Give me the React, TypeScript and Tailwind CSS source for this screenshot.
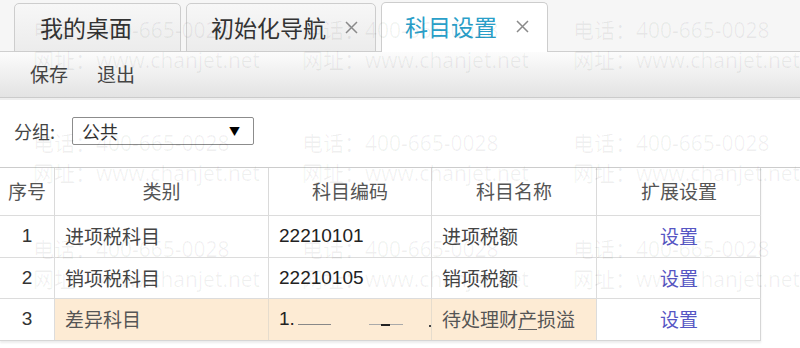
import React from "react";

const cjk = '"Noto Sans CJK SC", "Open Sans", sans-serif';
const body = 'Arial, "Liberation Sans", "Noto Sans CJK SC", sans-serif';

function Close({ className = "" }: { className?: string }) {
  return (
    <svg width="15" height="15" viewBox="0 0 15 15" className={className}>
      <path d="M2 2 L13 13 M13 2 L2 13" stroke="currentColor" strokeWidth="1.5" fill="none" />
    </svg>
  );
}

const headers = ["序号", "类别", "科目编码", "科目名称", "扩展设置"];

export default function App() {
  const wmCols = [33, 302, 573];
  const wmRows = [15, 128, 234];
  return (
    <div
      className="relative w-[800px] h-[348px] overflow-hidden bg-white"
      style={{ fontFamily: body }}
    >
      {/* Tab strip */}
      <div className="h-[52px] bg-[#f6f6f6] border-b border-[#cfcfcf] flex items-end pl-[14px] gap-[5px]">
        <div
          className="h-[49px] w-[167px] -mb-px rounded-t-[5px] border border-[#cdcdcd] bg-gradient-to-b from-[#f7f7f7] to-[#ececec] flex items-center pl-[25px] text-[23px] text-[#333]"
          style={{ fontFamily: cjk }}
        >
          我的桌面
        </div>
        <div
          className="h-[49px] w-[190px] -mb-px rounded-t-[5px] border border-[#cdcdcd] bg-gradient-to-b from-[#f7f7f7] to-[#ececec] flex items-center pl-[24px] text-[23px] text-[#333]"
          style={{ fontFamily: cjk }}
        >
          <span>初始化导航</span>
          <Close className="ml-[18px] text-[#8a8a8a]" />
        </div>
        <div
          className="h-[50px] w-[167px] -mb-px rounded-t-[5px] border border-b-0 border-[#cdcdcd] bg-white flex items-center pl-[23px] pb-[2px] text-[23px] text-[#2a9fc9]"
          style={{ fontFamily: cjk }}
        >
          <span>科目设置</span>
          <Close className="ml-[18px] text-[#8a8a8a]" />
        </div>
      </div>

      {/* Toolbar */}
      <div
        className="h-[46px] bg-gradient-to-b from-[#fcfcfc] to-[#e3e3e3] border-b border-[#cbcbcb] flex items-center pl-[30px] gap-[29px] text-[19px] text-[#444]"
        style={{ fontFamily: cjk }}
      >
        <span>保存</span>
        <span>退出</span>
      </div>
      <div className="h-[2px] bg-[#eeeeee]" />

      {/* Filter */}
      <div className="h-[67px] flex items-start pt-[17px] pl-[14px] text-[18px] text-[#444]" style={{ fontFamily: cjk }}>
        <div className="flex items-center h-[28px]">
          <span>分组:</span>
          <div className="ml-[17px] w-[182px] h-[28px] border border-[#8c8c8c] rounded-[2px] flex items-center justify-between pl-[9px] pr-[13px] text-[#333]">
            <span>公共</span>
            <span className="text-[11px] text-black">▼</span>
          </div>
        </div>
      </div>

      {/* Table */}
      <div className="border-t border-[#cccccc]">
        <div
          className="grid w-[761px] border-r border-b border-[#d6d6d6] shadow-[0_2px_2px_rgba(0,0,0,0.08)]"
          style={{ gridTemplateColumns: "55px 214px 163px 165px 164px" }}
        >
          {headers.map((h, i) => (
            <div
              key={h}
              className={`h-[48px] flex items-center justify-center border-b border-[#dcdcdc] text-[19px] text-[#555] ${i < 4 ? "border-r border-r-[#dadada]" : ""}`}
              style={{ fontFamily: cjk }}
            >
              {h}
            </div>
          ))}

          {/* Row 1 */}
          <div className="h-[42px] flex items-center justify-center border-r border-b border-[#dcdcdc] text-[19px] text-[#333]">1</div>
          <div className="h-[42px] flex items-center pl-[10px] border-r border-b border-[#dcdcdc] text-[19px] text-[#444]" style={{ fontFamily: cjk }}>进项税科目</div>
          <div className="h-[42px] flex items-center pl-[10px] border-r border-b border-[#dcdcdc] text-[19px] text-[#222]">22210101</div>
          <div className="h-[42px] flex items-center pl-[10px] border-r border-b border-[#dcdcdc] text-[19px] text-[#444]" style={{ fontFamily: cjk }}>进项税额</div>
          <div className="h-[42px] flex items-center justify-center border-b border-[#dcdcdc] text-[19px] text-[#5656c4]" style={{ fontFamily: cjk }}>设置</div>

          {/* Row 2 */}
          <div className="h-[41px] flex items-center justify-center border-r border-b border-[#dcdcdc] text-[19px] text-[#333]">2</div>
          <div className="h-[41px] flex items-center pl-[10px] border-r border-b border-[#dcdcdc] text-[19px] text-[#444]" style={{ fontFamily: cjk }}>销项税科目</div>
          <div className="h-[41px] flex items-center pl-[10px] border-r border-b border-[#dcdcdc] text-[19px] text-[#222]">22210105</div>
          <div className="h-[41px] flex items-center pl-[10px] border-r border-b border-[#dcdcdc] text-[19px] text-[#444]" style={{ fontFamily: cjk }}>销项税额</div>
          <div className="h-[41px] flex items-center justify-center border-b border-[#dcdcdc] text-[19px] text-[#5656c4]" style={{ fontFamily: cjk }}>设置</div>

          {/* Row 3 */}
          <div className="h-[41px] flex items-center justify-center border-r border-[#dcdcdc] text-[19px] text-[#333]">3</div>
          <div className="h-[41px] flex items-center pl-[10px] border-r border-[#e6dccd] bg-[#fdebd4] text-[19px] text-[#555]" style={{ fontFamily: cjk }}>差异科目</div>
          <div className="h-[41px] flex items-center pl-[10px] border-r border-[#e6dccd] bg-[#fdebd4] text-[19px] text-[#222]">
            <span>1.</span>
            <span className="ml-[3px] mt-[10px] w-[36px] border-b border-[#888]" />
            <span className="ml-[38px] mt-[10px] w-[14px] border-b border-[#aaa]" />
            <span className="mt-[10px] w-[10px] border-b-2 border-[#222]" />
            <span className="mt-[10px] w-[14px] border-b border-[#aaa]" />
            <span className="ml-[26px] mt-[12px] w-[2px] h-[2px] bg-[#444]" />
          </div>
          <div className="h-[41px] flex items-center pl-[10px] border-r border-[#dcdcdc] bg-[#fdebd4] text-[19px] text-[#555]" style={{ fontFamily: cjk }}>
            待处理财<span className="underline decoration-[#666] underline-offset-2">产</span>损溢
          </div>
          <div className="h-[41px] flex items-center justify-center text-[19px] text-[#5656c4]" style={{ fontFamily: cjk }}>设置</div>
        </div>
      </div>

      {/* Watermarks */}
      <div className="pointer-events-none absolute inset-0">
        {wmRows.map((y) =>
          wmCols.map((x) => (
            <div
              key={`${x}-${y}`}
              className="absolute leading-[30px] text-[21px] text-black/[0.06] whitespace-nowrap"
              style={{ left: x, top: y, fontFamily: '"Open Sans", "Noto Sans CJK SC", sans-serif' }}
            >
              <div>电话：400-665-0028</div>
              <div>网址：www.chanjet.net</div>
            </div>
          ))
        )}
      </div>
    </div>
  );
}
